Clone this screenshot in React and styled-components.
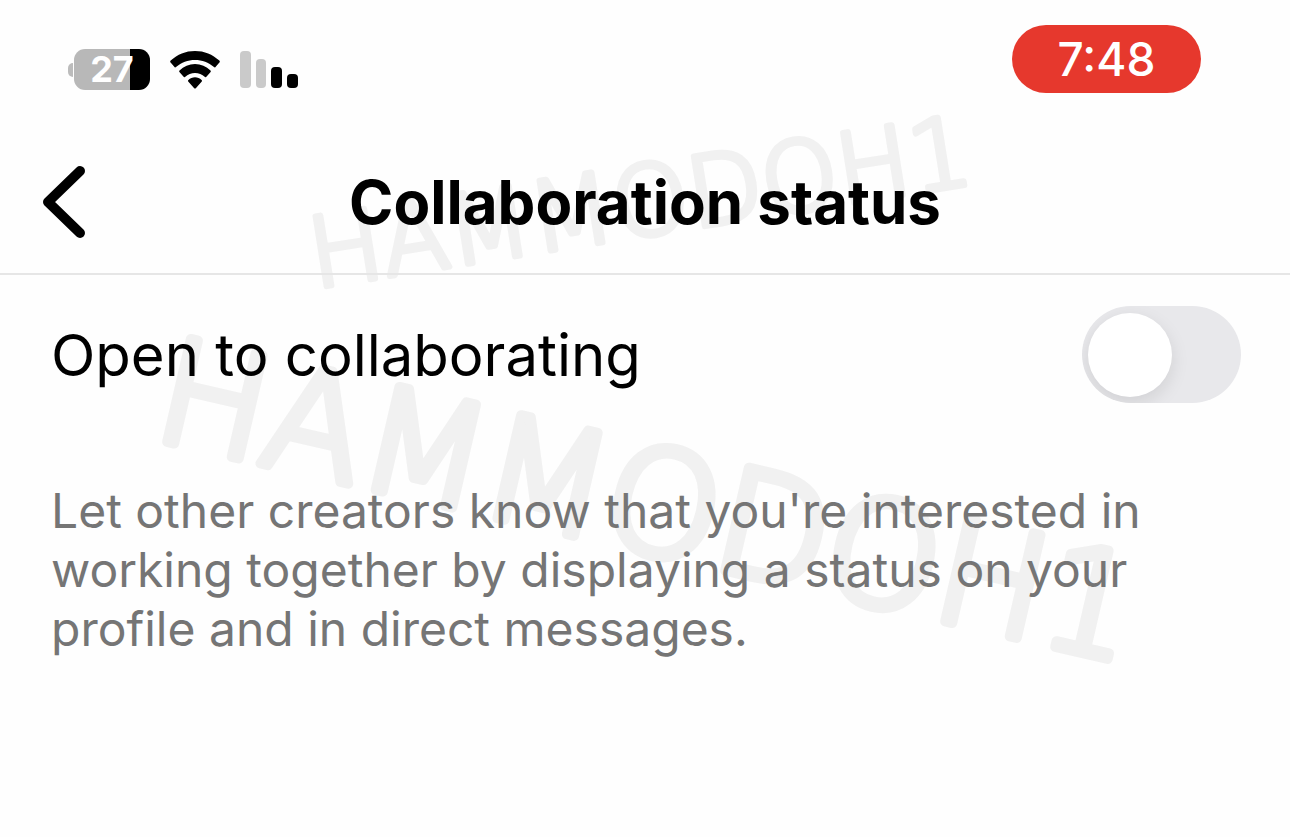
import React, { useState } from "react";
import styled, { createGlobalStyle } from "styled-components";

const GlobalStyle = createGlobalStyle`
  *, *::before, *::after { box-sizing: border-box; }
  body {
    margin: 0;
    background: #fefefe;
    color: #000;
    font-family: Inter, "Liberation Sans", sans-serif;
  }
`;

const Screen = styled.div`
  position: relative;
  isolation: isolate;
  min-height: 100vh;
  overflow: hidden;
`;

const StatusBar = styled.div`
  display: flex;
  justify-content: space-between;
  align-items: flex-start;
  height: 130px;
  padding: 25px 89px 0 68px;
`;

const Indicators = styled.div`
  display: flex;
  align-items: center;
  gap: 20px;
  padding-top: 24px;
`;

const Battery = styled.div`
  display: flex;
  align-items: center;
  gap: 1px;
`;

const BatteryTip = styled.span`
  width: 5px;
  height: 14px;
  border-radius: 5px 0 0 5px;
  background: #bcbcbc;
`;

const BatteryBody = styled.span`
  width: 76px;
  height: 41px;
  border-radius: 11px;
  background: linear-gradient(to right, #b8b8b8 74%, #000 74%);
  color: #fff;
  font-size: 36px;
  font-weight: 700;
  line-height: 41px;
  text-align: center;
`;

const Clock = styled.time`
  width: 189px;
  border-radius: 34px;
  background: #e6382d;
  color: #fff;
  font-size: 46px;
  font-weight: 500;
  line-height: 68px;
  text-align: center;
`;

const Header = styled.header`
  display: grid;
  grid-template-columns: 90px 1fr 90px;
  align-items: center;
  height: 145px;
  border-bottom: 2px solid #e6e6e6;
`;

const BackButton = styled.button`
  display: flex;
  padding: 0 0 0 40px;
  border: 0;
  background: none;
  color: inherit;
  cursor: pointer;
`;

const Title = styled.h1`
  margin: 0;
  font-size: 60px;
  font-weight: 700;
  line-height: 72px;
  text-align: center;
`;

const Main = styled.main`
  padding: 31px 49px 31px 51px;
`;

const SettingRow = styled.div`
  display: flex;
  justify-content: space-between;
  align-items: center;
  margin-bottom: 78px;
`;

const SettingLabel = styled.label`
  font-size: 58px;
  line-height: 72px;
`;

const Switch = styled.input`
  appearance: none;
  display: flex;
  align-items: center;
  width: 159px;
  height: 97px;
  margin: 0;
  padding: 0 6px;
  overflow: hidden;
  border-radius: 49px;
  background: #e8e8eb;
  cursor: pointer;

  &::before {
    content: "";
    width: 84px;
    height: 84px;
    border-radius: 50%;
    background: #fff;
    box-shadow: 0 6px 18px rgba(0, 0, 0, 0.1);
  }

  &:checked {
    justify-content: flex-end;
    background: #34c759;
  }
`;

const Description = styled.p`
  max-width: 1120px;
  margin: 0;
  color: #757575;
  font-size: 48px;
  line-height: 59px;
`;

const WatermarkLayer = styled.svg`
  position: absolute;
  z-index: -1;
  inset: 0;
  width: 100%;
  height: 100%;
  pointer-events: none;
`;

const WatermarkText = styled.text`
  fill: #f1f1f1;
  stroke: #f1f1f1;
  stroke-width: ${(p) => p.$stroke}px;
  stroke-linejoin: round;
  font-family: "DejaVu Sans", sans-serif;
  font-size: ${(p) => p.$size}px;
  font-weight: 200;
`;

const WifiIcon = () => (
  <svg width="50" height="38" viewBox="0 0 50 38" aria-hidden="true">
    <path d="M.6 11.600Q-.3 10.600 .7 9.600C7.500 3.300 15.500 0 25 0s17.500 3.300 24.300 9.600Q50.300 10.600 49.400 11.600L45.300 16.200Q44.700 16.700 44 16.100C38.500 11.300 32.200 9 25 9S11.500 11.300 6 16.100Q5.300 16.700 4.700 16.200z" />
    <path d="M9.400 21.100Q8.800 20.300 9.500 19.600C13.800 15.300 19 13 25 13s11.200 2.300 15.500 6.600q.7.700.1 1.500l-4.200 4.700q-.7.700-1.400.1C32 23.300 28.700 22 25 22S18 23.300 15 25.900q-.7.600-1.400-.1z" />
    <path d="M18.200 30.500Q17.600 29.700 18.400 29.100C20.300 27.200 22.500 26.300 25 26.300s4.700.9 6.600 2.800q.8.600.2 1.400L25.800 37.200Q25 38 24.200 37.200z" />
  </svg>
);

const SignalIcon = () => (
  <svg width="58" height="37" viewBox="0 0 58 37" aria-hidden="true">
    <rect x="0" y="0" width="11" height="37" rx="4" fill="#cacaca" />
    <rect x="16" y="8" width="10" height="29" rx="4" fill="#cacaca" />
    <rect x="31" y="16" width="11" height="21" rx="4" />
    <rect x="47" y="23" width="11" height="14" rx="4" />
  </svg>
);

const BackIcon = () => (
  <svg width="48" height="76" viewBox="0 0 48 76" fill="none" aria-hidden="true">
    <path
      d="M40 7 8 38l32 31"
      stroke="currentColor"
      strokeWidth="10"
      strokeLinecap="round"
      strokeLinejoin="round"
    />
  </svg>
);

export default function App() {
  const [open, setOpen] = useState(false);

  return (
    <>
      <GlobalStyle />
      <Screen>
        <StatusBar>
          <Indicators>
            <Battery>
              <BatteryTip />
              <BatteryBody>27</BatteryBody>
            </Battery>
            <WifiIcon />
            <SignalIcon />
          </Indicators>
          <Clock>7:48</Clock>
        </StatusBar>
        <Header>
          <BackButton type="button" aria-label="Back">
            <BackIcon />
          </BackButton>
          <Title>Collaboration status</Title>
        </Header>
        <Main>
          <SettingRow>
            <SettingLabel htmlFor="open-to-collaborating">
              Open to collaborating
            </SettingLabel>
            <Switch
              id="open-to-collaborating"
              type="checkbox"
              role="switch"
              aria-describedby="collaborating-description"
              checked={open}
              onChange={(e) => setOpen(e.target.checked)}
            />
          </SettingRow>
          <Description id="collaborating-description">
            Let other creators know that you're interested in working together
            by displaying a status on your profile and in direct messages.
          </Description>
        </Main>
        <WatermarkLayer aria-hidden="true">
          <WatermarkText $size={97} $stroke={6} transform="translate(315 288) rotate(-9)">
            HAMMODOH1
          </WatermarkText>
          <WatermarkText $size={145} $stroke={10} transform="translate(150 438) rotate(13)">
            HAMMODOH1
          </WatermarkText>
        </WatermarkLayer>
      </Screen>
    </>
  );
}
